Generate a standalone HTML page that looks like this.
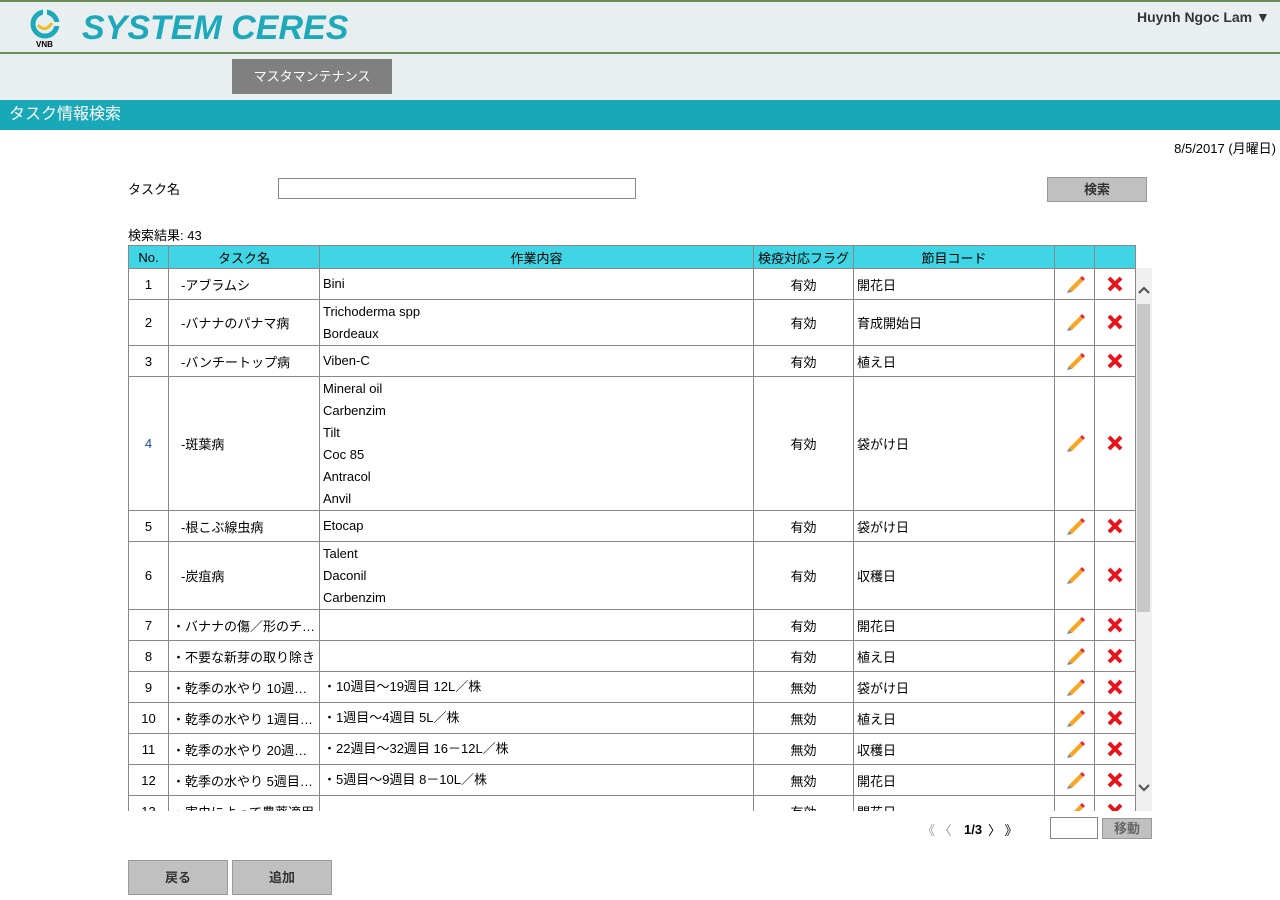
<!DOCTYPE html>
<html><head><meta charset="utf-8"><style>
*{box-sizing:border-box;margin:0;padding:0}
body{width:1280px;height:900px;background:#fff;font-family:"Liberation Sans","Noto Sans CJK JP",sans-serif;font-size:13px;color:#000;position:relative;overflow:hidden}
.a{position:absolute}
#hd{left:0;top:0;width:1280px;height:100px;background:#e9eef0;border-top:2px solid #6b8c5a}
#hl{left:0;top:52px;width:1280px;height:2px;background:#6b8c5a}
#title{left:82px;top:9px;font-size:34px;font-weight:bold;font-style:italic;color:#1ea9bb;letter-spacing:0}
#user{left:1137px;top:9px;font-weight:bold;font-size:14px;color:#333}
#nav{left:232px;top:59px;width:160px;height:35px;background:#808080;color:#fff;font-size:13px;text-align:center;line-height:35px}
#bar{left:0;top:100px;width:1280px;height:30px;background:#19a8b8;color:#fff;font-size:16px;line-height:30px;padding-left:9px}
.btn{background:#c0c0c0;border:1px solid #999;text-align:center;font-weight:bold;color:#333}
table{border-collapse:collapse;table-layout:fixed;width:1007px}
td,th{border:1px solid #888;font-size:13px;font-weight:normal;padding:0 3px}
th{background:#3fd5e4;height:23px;text-align:center}
td.c{text-align:center}
td.l{line-height:22px}
.ic{text-align:center}
</style></head><body>
<div class="a" id="hd"></div>
<div class="a" id="hl"></div>
<svg class="a" style="left:30px;top:9px" width="30" height="30" viewBox="0 0 30 30"><circle cx="15" cy="15" r="12" fill="none" stroke="#1ea9bb" stroke-width="5"/><rect x="13" y="0" width="4" height="6" fill="#e9eef0"/><rect x="24" y="13" width="6" height="4" fill="#e9eef0"/><path d="M8 16 Q15 24 22 14" stroke="#e8c020" stroke-width="3" fill="none"/></svg>
<div class="a" style="left:36px;top:40px;font-size:8px;font-weight:bold">VNB</div>
<div class="a" id="title">SYSTEM CERES</div>
<div class="a" id="user">Huynh Ngoc Lam ▼</div>
<div class="a" id="nav">マスタマンテナンス</div>
<div class="a" id="bar">タスク情報検索</div>
<div class="a" style="left:1166px;top:138px;width:110px;text-align:right">8/5/2017 (月曜日)</div>
<div class="a" style="left:128px;top:179px">タスク名</div>
<div class="a" style="left:278px;top:178px;width:358px;height:21px;border:1px solid #888"></div>
<div class="a btn" style="left:1047px;top:177px;width:100px;height:25px;line-height:23px">検索</div>
<div class="a" style="left:128px;top:225px">検索結果: 43</div>
<div class="a" style="left:1135px;top:268px;width:17px;height:543px;background:#f0f0f0"></div>
<div class="a" style="left:1137px;top:304px;width:13px;height:308px;background:#c8c8c8"></div>
<svg class="a" style="left:1137px;top:284px" width="14" height="12" viewBox="0 0 14 12"><path d="M2 9 L7 4 L12 9" stroke="#555" stroke-width="2.2" fill="none"/></svg>
<svg class="a" style="left:1137px;top:782px" width="14" height="12" viewBox="0 0 14 12"><path d="M2 3 L7 8 L12 3" stroke="#555" stroke-width="2.2" fill="none"/></svg>
<div class="a" style="left:128px;top:245px;width:1008px;height:566px;overflow:hidden">
<table>
<colgroup><col style="width:40px"><col style="width:151px"><col style="width:434px"><col style="width:100px"><col style="width:201px"><col style="width:40px"><col style="width:41px"></colgroup>
<tr><th>No.</th><th>タスク名</th><th>作業内容</th><th>検疫対応フラグ</th><th>節目コード</th><th></th><th></th></tr>
</table></div>
<div class="a" style="left:922px;top:820px;color:#999;font-size:13px">《 〈</div>
<div class="a" style="left:964px;top:822px;font-weight:bold;font-size:13px">1/3</div>
<div class="a" style="left:988px;top:820px;font-size:13px">〉 》</div>
<div class="a" style="left:1050px;top:817px;width:48px;height:22px;border:1px solid #888"></div>
<div class="a btn" style="left:1102px;top:818px;width:50px;height:21px;line-height:19px;color:#666">移動</div>
<div class="a btn" style="left:128px;top:860px;width:100px;height:35px;line-height:33px">戻る</div>
<div class="a btn" style="left:232px;top:860px;width:100px;height:35px;line-height:33px">追加</div>
<script>
var P='<svg width="20" height="20" viewBox="0 0 20 20"><path d="M4 16 L15 5 L18 8 L7 19 Z" fill="#f6a623"/><path d="M15 5 L17 3 L20 6 L18 8Z" fill="#e23"/><path d="M4 16 L7 19 L2 20Z" fill="#888"/></svg>';
var X='<svg width="18" height="18" viewBox="0 0 18 18" style="margin-top:2px"><path d="M3 3L15 15M15 3L3 15" stroke="#e8141c" stroke-width="4"/></svg>';
var R=[[1,'-アブラムシ',['Bini'],'有効','開花日',31],[2,'-バナナのパナマ病',['Trichoderma spp','Bordeaux'],'有効','育成開始日',46],[3,'-バンチートップ病',['Viben-C'],'有効','植え日',31],[4,'-斑葉病',['Mineral oil','Carbenzim','Tilt','Coc 85','Antracol','Anvil'],'有効','袋がけ日',134],[5,'-根こぶ線虫病',['Etocap'],'有効','袋がけ日',31],[6,'-炭疽病',['Talent','Daconil','Carbenzim'],'有効','収穫日',68],[7,'・バナナの傷／形のチ…',[''],'有効','開花日',31],[8,'・不要な新芽の取り除き',[''],'有効','植え日',31],[9,'・乾季の水やり 10週…',['・10週目～19週目 12L／株'],'無効','袋がけ日',31],[10,'・乾季の水やり 1週目…',['・1週目～4週目 5L／株'],'無効','植え日',31],[11,'・乾季の水やり 20週…',['・22週目～32週目 16－12L／株'],'無効','収穫日',31],[12,'・乾季の水やり 5週目…',['・5週目～9週目 8－10L／株'],'無効','開花日',31],[13,'・害虫によって農薬適用',[''],'有効','開花日',31]];
var h='';R.forEach(function(r){h+='<tr style="height:'+r[5]+'px"><td class="c" style="color:'+(r[0]==4?'#1a4fa0':'#000')+'">'+r[0]+'</td><td style="padding-left:'+(r[1][0]=='-'?'12px':'3px')+'">'+r[1]+'</td><td class="l">'+r[2].join('<br>')+'</td><td class="c">'+r[3]+'</td><td>'+r[4]+'</td><td class="ic">'+P+'</td><td class="ic">'+X+'</td></tr>'});
document.querySelector('table').insertAdjacentHTML('beforeend',h);
</script>
</body></html>
